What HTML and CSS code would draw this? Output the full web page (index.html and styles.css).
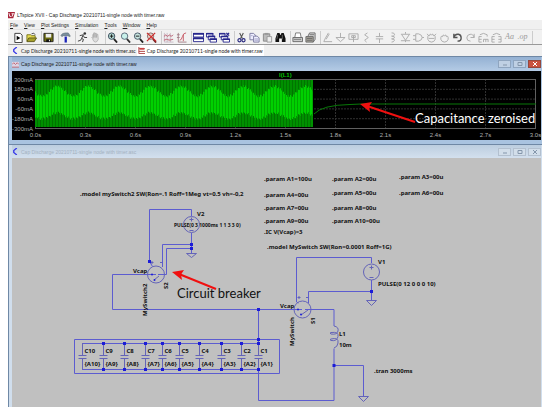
FILE: index.html
```html
<!DOCTYPE html>
<html lang="en">
<head>
    <meta charset="UTF-8">
    <meta name="viewport" content="width=device-width, initial-scale=1.0">
    <title>LTspice XVII</title>
    <link rel="stylesheet" href="styles.css">
</head>
<body>
    <div class="app">
        <header class="title-bar">
            <svg class="icon" viewBox="0 0 8 8"><path d="M0 0h8L6 7H0z" fill="#a8263a"/><path d="M1 1l1 4h2M4 2h3M5.500 2L5 5" stroke="#fff" fill="none"/></svg>
            <span>LTspice XVII - Cap Discharge 20210711-single node with timer.raw</span>
        </header>

        <nav class="menu-bar">
            <button><u>F</u>ile</button>
            <button><u>V</u>iew</button>
            <button><u>P</u>lot Settings</button>
            <button><u>S</u>imulation</button>
            <button><u>T</u>ools</button>
            <button><u>W</u>indow</button>
            <button><u>H</u>elp</button>
        </nav>

        <div class="toolbar">
            <div class="group">
                <button aria-label="New"><svg viewBox="0 0 12 12"><path d="M2 1.500h6l2 2v8H2z" fill="#fff" stroke="#333"/><path d="M4 4l4 2.500L4 9z" fill="#000"/></svg></button>
                <button aria-label="Open"><svg viewBox="0 0 12 12"><path d="M1 10V3h4l1 1h4v3" fill="#e8dc50" stroke="#77731c"/><path d="M1 10.500l2-4h8.500L9 10.500z" fill="#a5a02a" stroke="#5e5a18"/><path d="M6 2q3-2 4 1" stroke="#444" fill="none"/></svg></button>
            </div>
            <div class="group">
                <button aria-label="Save"><svg viewBox="0 0 12 12"><path d="M1 1.500h10v9H1z" fill="#6c6c10" stroke="#222"/><path d="M3 2h6v4H3z" fill="#eee"/><path d="M3.500 8h5v3h-5z" fill="#111"/><path d="M6.500 8.500h1V10h-1z" fill="#fff"/></svg></button>
            </div>
            <div class="group">
                <button aria-label="Control panel"><svg viewBox="0 0 12 12"><path d="M1 4q1-3 5-3h3l2 3v1L8 4H4L2 5z" fill="#7c8f9c" stroke="#536572" stroke-width=".6"/><path d="M5 5h2.500v6.500H5z" fill="#1a22b8"/></svg></button>
            </div>
            <div class="group">
                <button aria-label="Run"><svg viewBox="0 0 12 12"><circle cx="8.500" cy="1.700" r="1.400" fill="#333"/><path d="M3 4l4-1-2 4 2 1-1 3M5 7l-1 2-3 1M7 4l1 2h3" stroke="#333" fill="none"/></svg></button>
                <button aria-label="Halt"><svg viewBox="0 0 12 12"><path d="M3 7L1.500 5.500M3 7V3l1-1v4-5h1.500v5V1.500H7V6l.5-3.500h1L9 8q-1 3-3 3T3 8z" fill="#ddd" stroke="#aaa" stroke-width=".8"/></svg></button>
            </div>
            <div class="group">
                <button aria-label="Zoom in"><svg viewBox="0 0 12 12"><path d="M7.500 7.500l3.500 4" stroke="#222" stroke-width="2"/><circle cx="5" cy="4.500" r="3.500" fill="#b9dfd8" stroke="#345"/><path d="M3 4.500h4M5 2.500v4" stroke="#111"/></svg></button>
                <button aria-label="Pan"><svg viewBox="0 0 12 12"><path d="M7.500 7.500l3.500 4" stroke="#333" stroke-width="2"/><circle cx="5" cy="4.500" r="3.500" fill="#c8f0ea" stroke="#567"/></svg></button>
                <button aria-label="Zoom out"><svg viewBox="0 0 12 12"><path d="M7.500 7.500l3.500 4" stroke="#222" stroke-width="2"/><circle cx="5" cy="4.500" r="3.500" fill="#c8e5e0" stroke="#456"/><path d="M3 4.500h4" stroke="#111"/></svg></button>
                <button aria-label="Zoom to fit"><svg viewBox="0 0 12 12"><path d="M7.500 7.500l3.500 4" stroke="#722" stroke-width="2"/><circle cx="5" cy="4.500" r="3.500" fill="#dfd0c8" stroke="#866"/><path d="M1 1l10 9M10 1L1 10" stroke="#d02a2a" stroke-width="1.300"/></svg></button>
            </div>
            <div class="group">
                <button aria-label="Autorange"><svg viewBox="0 0 12 12"><path d="M1.500 1v10h10M4.500 1v10M8 1v10M1 4h10M1 8h10" stroke="#b9a5b5" stroke-width=".7" fill="none"/><path d="M1 5l2-2 2 2 2-2 2 2 2-2M1 9l3-1 3 1 4-1" stroke="#c76a78" fill="none"/></svg></button>
                <button aria-label="Plot settings"><svg viewBox="0 0 12 12"><path d="M2.500 1v10h9M1 3h3M1 6h3" stroke="#a27d86" fill="none"/><path d="M4 9q2 0 3-4t4-4M8 3v7" stroke="#c75a66" fill="none"/></svg></button>
            </div>
            <div class="group">
                <button aria-label="Tile"><svg viewBox="0 0 12 12"><path d="M.5 1.500h11v4H.5zM.5 6.500h11v4H.5z" fill="#fff" stroke="#26268c"/><path d="M0 2h12M0 7h12" stroke="#26268c" stroke-width="2"/></svg></button>
                <button aria-label="Cascade"><svg viewBox="0 0 12 12"><g fill="#fff" stroke="#26268c"><path d="M.5 1.500h7v4h-7z"/><path d="M2.500 4.500h7v4h-7z"/><path d="M4.500 7.500h7v3.500h-7z"/></g><path d="M0 2h8M2 5h8M4 8h8" stroke="#26268c" stroke-width="1.600"/></svg></button>
                <button aria-label="Close all"><svg viewBox="0 0 12 12"><g fill="#fff" stroke="#26268c"><path d="M.5 1.500h6v4h-6z"/><path d="M2.500 4.500h7v4h-7z"/><path d="M4.500 7.500h7v3.500h-7z"/></g><path d="M0 2h7M2 5h8M4 8h8M8 1l3 3M11 1L8 4" stroke="#26268c" stroke-width="1.400"/></svg></button>
            </div>
            <div class="group">
                <button aria-label="Cut"><svg viewBox="0 0 12 12"><path d="M4 1l3 6M8 1L5 7" stroke="#555" stroke-width="1.200"/><g fill="none" stroke="#2c2c80" stroke-width="1.300"><circle cx="3.800" cy="9" r="1.700"/><circle cx="8.200" cy="9" r="1.700"/></g></svg></button>
                <button aria-label="Copy"><svg viewBox="0 0 12 12"><g fill="#eef" stroke="#7a7aa0"><path d="M1 1.500h4l2 2v5H1z"/><path d="M5 4.500h4l2 2v4.500H5z"/></g><path d="M6 7.500h4M6 9h4M2 4h2" stroke="#8888b0" stroke-width=".7"/></svg></button>
                <button aria-label="Paste"><svg viewBox="0 0 12 12"><path d="M1.500 2h7v8h-7z" fill="#bbb" stroke="#888"/><path d="M3 1h4v2H3z" fill="#999"/><path d="M5.500 5h5v6h-5z" fill="#eee" stroke="#999"/></svg></button>
                <button aria-label="Find"><svg viewBox="0 0 12 12"><path d="M2.500 1h2.500l.5 2h1L7 1h2.500l2 6v4H7.500V7h-3v4H.5V7z" fill="#111"/><path d="M3 3L2 8M8 3v5" stroke="#888" stroke-width=".7"/></svg></button>
            </div>
            <div class="group">
                <button aria-label="Print"><svg viewBox="0 0 12 12"><path d="M3 6l1-5h5l1 5" fill="#fff" stroke="#777"/><path d="M1 6h10.500v4.500H1z" fill="#ccc" stroke="#666"/><path d="M2 8h8" stroke="#777"/></svg></button>
                <button aria-label="Print setup"><svg viewBox="0 0 12 12"><path d="M3 5l2-4h6v7L9 11" fill="#ddd" stroke="#666"/><path d="M1 5h8v6H1z" fill="#aaa69c" stroke="#666"/><path d="M2 7h6M2 9h6M5 3h5" stroke="#666"/></svg></button>
            </div>
            <div class="group edit">
                <button aria-label="Wire"><svg viewBox="0 0 12 12"><path d="M7 1L3 8l-1 2.500h9M8 2L4.500 8"/></svg></button>
                <button aria-label="Ground"><svg viewBox="0 0 12 12"><path d="M6 1v5M1 6h10L6 10.500z"/></svg></button>
                <button aria-label="Label net"><svg viewBox="0 0 12 12"><path d="M1 2h10v6H1zM6 4v7M4 4v2h4V4z"/></svg></button>
                <button aria-label="Resistor"><svg viewBox="0 0 12 12"><path d="M7 1L4 3l4 3-4 3 2 2"/></svg></button>
                <button aria-label="Capacitor"><svg viewBox="0 0 12 12"><path d="M6 1v4M2 5h8M2 7.500h8M6 7.500V12"/></svg></button>
                <button aria-label="Inductor"><svg viewBox="0 0 12 12"><path d="M5 1q4 0 3 2.500Q7 5 5 4.500q4 0 3 2Q7 8 5 7.500q4 0 3 2Q7 11 5 11"/></svg></button>
                <button aria-label="Diode"><svg viewBox="0 0 12 12"><path d="M1 2.500h10M2 3l4 6 4-6M1 9.500h10M6 9.500V11M6 0v2"/></svg></button>
                <button aria-label="Component"><svg viewBox="0 0 12 12"><path d="M3 2h3q4 1 4 4t-4 4H3zM0 4h3M0 8h3M10 6h2"/></svg></button>
                <button aria-label="Move"><svg viewBox="0 0 12 12"><path d="M2 5q0-2 2-1 0-3 2-1 2-2 2 1 2-1 2 1v3q-1 3-4 3T2 8zM1 2l2 2M11 2L9 4M3 7h6"/></svg></button>
                <button aria-label="Drag"><svg viewBox="0 0 12 12"><path d="M2 6q0-2 2-1 0-3 2-1 2-2 2 1 2-1 2 1v2q-1 3-4 3T2 8z"/></svg></button>
                <button class="on" aria-label="Undo"><svg viewBox="0 0 12 12"><path d="M2 2v4h4M2 6q1-4 5-3.500Q10 3 10 6.500T6 10"/></svg></button>
                <button aria-label="Redo"><svg viewBox="0 0 12 12"><path d="M10 2v4H6M10 6Q9 2 5.500 2.500 2 3 2 6.500T6 10"/></svg></button>
                <button aria-label="Rotate"><svg viewBox="0 0 12 12"><path d="M4 5H1v6h3M1 8h3M6 11V8h5v3M8.500 8v3M2 3q4-3 8 0v2"/></svg></button>
                <button aria-label="Mirror"><svg viewBox="0 0 12 12"><path d="M4 5H1v6h3M1 8h3M8 5h3v6H8M11 8H8M2 3q4-3 8 0"/></svg></button>
                <button>Aa</button>
                <button>.op</button>
            </div>
        </div>

        <nav class="tabs">
            <button class="tab">
                <svg class="icon" viewBox="0 0 8 8"><path d="M5.500 0L2 3v2l3.500 3" stroke="#3838e8" stroke-width="1.500" fill="none"/></svg>
                Cap Discharge 20210711-single node with timer.asc
            </button>
            <button class="tab active">
                <svg class="icon" viewBox="0 0 8 8"><path d="M1 0v7.500h7M1 2h7M1 5h7" stroke="#a33" fill="none"/><path d="M2 1h5v2H2z" fill="#c44"/></svg>
                Cap Discharge 20210711-single node with timer.raw
            </button>
        </nav>

        <main class="mdi">
            <section class="window">
                <header class="window-title">
                    <svg class="icon" viewBox="0 0 8 8"><path d="M0 1h8v6H0z" fill="#dcd4e4"/><path d="M0 4l2-2 2 2 2-2 2 2M0 7h8" stroke="#c0606c" fill="none"/></svg>
                    <h2>Cap Discharge 20210711-single node with timer.raw</h2>
                    <button aria-label="Minimize"><svg viewBox="0 0 12 8"><path d="M4 5h4"/></svg></button>
                    <button aria-label="Restore"><svg viewBox="0 0 12 8"><path d="M4 2.500h4v3H4z"/></svg></button>
                    <button class="close" aria-label="Close"><svg viewBox="0 0 12 8"><path d="M4 2l4 4M8 2L4 6"/></svg></button>
                </header>
                <svg class="plot" viewBox="12 71 529 69">
                    <g id="grid"></g>
                    <g id="wave"></g>
                    <path class="trace" d="M314 114Q322 105 350 104.500L361 104H536"/>
                    <text class="trace-name" x="279" y="77">I(L1)</text>
                    <g id="axis" class="axis"></g>
                    <path class="arrow" d="M415 122L367 106"/>
                    <path class="arrow-head" d="M360 104l12-2-3 4.500 1 5.500z"/>
                    <text class="note light" x="415" y="123">Capacitance zeroised</text>
                </svg>
            </section>

            <section class="window inactive">
                <header class="window-title">
                    <svg class="icon" viewBox="0 0 8 8"><path d="M5.500 0L2 3v2l3.500 3" stroke="#3838e8" stroke-width="1.500" fill="none"/></svg>
                    <h2>Cap Discharge 20210711-single node with timer.asc</h2>
                    <button aria-label="Minimize"><svg viewBox="0 0 12 8"><path d="M4 5h4"/></svg></button>
                    <button aria-label="Restore"><svg viewBox="0 0 12 8"><path d="M4 2.500h4v3H4z"/></svg></button>
                    <button aria-label="Close"><svg viewBox="0 0 12 8"><path d="M4 2l4 4M8 2L4 6"/></svg></button>
                </header>
                <svg class="schematic" viewBox="12 158 529 249">
                    <!-- wires -->
                    <g class="wire">
                        <path d="M191.500 216v-6.500h-42v52l3 5M191.500 233v20M191.500 244.500h-29V267M191.500 248.500h-25v26H158"/>
                        <path d="M156 274.500h-43.500v35H302M258.500 309.500v46M258.500 358.500v42h75.500v-52"/>
                        <path d="M371.500 263v-5.500h-75V302l2 1M371.500 280v20M371.500 291.500h-63V303M305 309.500h29V326"/>
                        <path d="M334 365.500h29.500V396"/>
                        <path d="M74.500 339.500h205v34h-205zM82.500 343.500h176M82.500 369.500h176"/>
                    </g>
                    <!-- symbols -->
                    <g class="symbol">
                        <circle cx="191.500" cy="224.500" r="8"/>
                        <path d="M189.500 219.500h4M191.500 217.500v4M189.500 230.500h4"/>
                        <circle cx="371.500" cy="272" r="8"/>
                        <path d="M369.500 267.500h4M371.500 265.500v4M369.500 277.500h4"/>
                        <circle cx="156" cy="274.500" r="8.500"/>
                        <path d="M154 280l5-4M150.500 262.500h3M152 261v3M160 262.500h2"/>
                        <circle cx="302.500" cy="309.500" r="8.500"/>
                        <path d="M301 315l7-5M297.500 297.500h3M299 296v3M306 297.500h2"/>
                        <path d="M186.500 253.500h10l-5 4zM366.500 300.500h10l-5 5zM358.500 396.500h10l-5 5z"/>
                        <path d="M334 326q5 1 4 5t-7 3q-2-1 0-1.500 8-1 7 4t-7 4q-2-1 0-1.500 8-2 7 4-.5 4-4 5"/>
                    </g>
                    <g class="symbol" id="caps"></g>
                    <g class="node">
                        <path d="M190 243h3v3h-3zM190 247h3v3h-3zM148 260h3v3h-3zM257 308h3v3h-3zM257 338h3v3h-3zM370 290h3v3h-3zM332.500 364h3v3h-3z"/>
                        <circle cx="152" cy="274.500" r="1"/><circle cx="154.500" cy="280" r="1"/>
                        <circle cx="298" cy="309.500" r="1"/><circle cx="301" cy="314.500" r="1"/>
                    </g>
                    <!-- directives and labels -->
                    <g class="label">
                        <text x="80" y="196">.model mySwitch2 SW(Ron=.1 Roff=1Meg vt=0.5 vh=-0,2</text>
                        <text x="264" y="181">.param A1=100u</text>
                        <text x="332" y="181">.param A2=00u</text>
                        <text x="399" y="179">.param A3=00u</text>
                        <text x="264" y="197">.param A4=00u</text>
                        <text x="332" y="195">.param A5=00u</text>
                        <text x="399" y="195">.param A6=00u</text>
                        <text x="264" y="210">.param A7=00u</text>
                        <text x="332" y="210">.param A8=00u</text>
                        <text x="264" y="223">.param A9=00u</text>
                        <text x="332" y="223">.param A10=00u</text>
                        <text x="264" y="234">.IC V(Vcap)=3</text>
                        <text x="267" y="249">.model MySwitch SW(Ron=0.0001 Roff=1G)</text>
                        <text x="197" y="216">V2</text>
                        <text x="174" y="227" class="small">PULSE(0 3 1000ms 1 1 3 3 0)</text>
                        <text x="378" y="264">V1</text>
                        <text x="378" y="286">PULSE(0 12 0 0 0 10)</text>
                        <text x="133" y="273">Vcap</text>
                        <text x="280" y="308">Vcap</text>
                        <text transform="translate(147 316) rotate(-90)">MySwitch2</text>
                        <text transform="translate(168 289) rotate(-90)">S2</text>
                        <text transform="translate(294 346) rotate(-90)">MySwitch</text>
                        <text transform="translate(315 324) rotate(-90)">S1</text>
                        <text x="339" y="336">L1</text>
                        <text x="339" y="347">10m</text>
                        <text x="374" y="373">.tran 3000ms</text>
                        <g id="cap-labels"></g>
                    </g>
                    <path class="arrow" d="M216 289L179 274"/>
                    <path class="arrow-head" d="M172 272l12-2-3 4.500 1 5.500z"/>
                    <text class="note" x="177" y="298">Circuit breaker</text>
                </svg>
            </section>
        </main>
    </div>
    <script src="script.js"></script>
</body>
</html>
```

FILE: styles.css
```css
body {
    margin: 0;
    background: #fff;
    font-family: "Liberation Sans", Arial, sans-serif;
    font-size: 5px;
    line-height: 8px;
    color: #222;
}
button {
    display: flex;
    align-items: center;
    justify-content: center;
    border: none;
    padding: 0;
    background: none;
    font: inherit;
    color: inherit;
}
svg {
    display: block;
}
.app {
    margin: 10px 8px 5px;
}
.icon {
    width: 7px;
    height: 7px;
    flex: none;
}
.title-bar {
    display: flex;
    align-items: center;
    gap: 2px;
    height: 10px;
}
.menu-bar {
    display: flex;
    gap: 6px;
    height: 9px;
    padding-left: 2px;
    background: #f0f0f0;
}
.toolbar {
    display: flex;
    align-items: center;
    height: 16px;
    padding-left: 4px;
    border-top: 1px solid #e2e2e2;
    border-bottom: 1px solid #999;
    background: #f1f1f1;
    box-sizing: border-box;
}
.group {
    display: flex;
    padding-right: 3px;
    border-right: 1px solid #ccc;
}
.group button {
    width: 13px;
    height: 13px;
}
.group svg {
    width: 11px;
    height: 11px;
}
.edit {
    color: #999;
    font-family: "Liberation Serif", serif;
    font-size: 8px;
    font-style: italic;
}
.edit path {
    fill: none;
    stroke: #aaa;
}
.edit .on path {
    stroke: #555;
    stroke-width: 1.5;
}
.tabs {
    display: flex;
    height: 11px;
    padding-left: 3px;
    background: #f0f0f0;
    font-family: Lato, sans-serif;
}
.tab {
    gap: 2px;
    padding: 0 1px;
}
.tab.active {
    background: #fff;
}
.window {
    padding: 0 1px 4px 3px;
    border-top: 1px solid #6f88a5;
    border-left: 1px solid #6f88a5;
    background: #a9c3e0;
}
.window-title {
    display: flex;
    align-items: center;
    gap: 2px;
    height: 14px;
    background: linear-gradient(#94b1d3, #b4cbe5);
}
.window-title h2 {
    flex: 1;
    margin: 0;
    font-size: 5px;
    font-weight: normal;
}
.window-title button {
    width: 13px;
    height: 8px;
    border: 1px solid #8fa5bf;
    background: #bfd0e4;
    box-sizing: border-box;
}
.window-title button svg {
    width: 12px;
    height: 8px;
    flex: none;
}
.window-title button path {
    fill: none;
    stroke: #8496ab;
}
.window-title .close {
    background: #c9513f;
    border-color: #94493f;
}
.window-title .close path {
    stroke: #fff;
}
.inactive {
    padding-bottom: 0;
    background: #d0deed;
}
.inactive .window-title {
    height: 13px;
    background: linear-gradient(#bccddf, #d3e0ee);
    color: #a3b1c0;
}
.inactive .window-title button {
    background: #d2deea;
    border-color: #b3c0cf;
}
.plot, .schematic {
    width: 100%;
    height: auto;
}
.plot {
    background: #000;
}
.schematic {
    background: #c0c0c0;
}
.grid-line {
    fill: none;
    stroke: #303030;
    stroke-dasharray: 2 1;
}
.frame {
    fill: none;
    stroke: #606060;
}
.dense {
    fill: #009000;
}
.dense-lines {
    fill: none;
    stroke: #007400;
}
.bright {
    fill: #00d000;
}
.bright-lines {
    fill: none;
    stroke: #00a800;
}
.trace {
    fill: none;
    stroke: #087808;
}
.trace-name {
    fill: #00c000;
    font-size: 6px;
    font-weight: bold;
}
.axis {
    fill: #b0b0b0;
    font-size: 6px;
}
.y-label {
    text-anchor: end;
}
.x-label {
    text-anchor: middle;
}
.wire {
    fill: none;
    stroke: #5c5cd0;
}
.symbol {
    fill: none;
    stroke: #6464b8;
}
.node {
    fill: #1c1cd8;
}
.label {
    fill: #111;
    font-family: "Noto Sans", sans-serif;
    font-size: 6px;
    font-weight: bold;
}
.small {
    font-size: 5px;
}
.arrow {
    stroke: #f01010;
    stroke-width: 2;
}
.arrow-head {
    fill: #f01010;
}
.note {
    font-family: Lato, sans-serif;
    font-size: 13px;
    fill: #111;
}
.note.light {
    fill: #fff;
}
```

FILE: script.js
```javascript
// Plot grid and axis labels
const yLabels = ['300mA', '180mA', '60mA', '-60mA', '-180mA', '-300mA'];
let grid = '';
let axis = '';
yLabels.forEach((label, i) => {
    const y = 79.5 + i * 9.8;
    grid += `<path class="grid-line" d="M35 ${y}H536"/>`;
    axis += `<text class="y-label" x="33" y="${y + 2}">${label}</text>`;
});
for (let i = 0; i <= 10; i++) {
    const x = 35.5 + i * 50;
    grid += `<path class="grid-line" d="M${x} 79V128"/>`;
    axis += `<text class="x-label" x="${x}" y="137">${(i * 0.3).toFixed(1)}s</text>`;
}
grid += '<rect class="frame" x="35.5" y="79.5" width="500" height="49"/>';
document.getElementById('grid').innerHTML = grid;
document.getElementById('axis').innerHTML = axis;

// Oscillation: dense swing with a brighter beating band in the middle
let dark = '';
let lines = '';
let bars = '';
for (let x = 35; x < 313; x++) {
    const beat = Math.cos((x - 57) * 2 * Math.PI / 31);
    const top = 90 - beat * 5 + (x * 7 % 5) * 0.6;
    const bottom = 117 - beat * 3 - (x * 3 % 5) * 0.6;
    bars += `M${x} ${top}h1V${bottom}h-1z`;
    if (x % 3 === 0) {
        lines += `M${x + 0.5} ${top}V${bottom}`;
    }
    if (x % 3 === 1) {
        dark += `M${x + 0.5} 80v47`;
    }
}
document.getElementById('wave').innerHTML =
    '<rect class="dense" x="35" y="80" width="278" height="47"/>' +
    `<path class="dense-lines" d="${dark}"/>` +
    `<path class="bright" d="${bars}"/>` +
    `<path class="bright-lines" d="${lines}"/>`;

// Capacitor bank, C10 on the left
const capX = [82.5, 103.5, 124.5, 145.5, 162.5, 179.5, 199.5, 221.5, 241.5, 258.5];
let caps = '';
let names = '';
capX.forEach((x, i) => {
    const n = 10 - i;
    caps += `<path d="M${x} 343v12.500M${x - 4} 355.500h8M${x - 4} 358.500h8M${x} 358.500V370"/>`;
    if (i > 0) {
        caps += `<path class="node" stroke="none" d="M${x - 1.5} 342h3v3h-3zM${x - 1.5} 368h3v3h-3z"/>`;
    }
    names += `<text x="${x + 2}" y="353">C${n}</text><text x="${x + 2}" y="366">{A${n}}</text>`;
});
document.getElementById('caps').innerHTML = caps;
document.getElementById('cap-labels').innerHTML = names;
```
